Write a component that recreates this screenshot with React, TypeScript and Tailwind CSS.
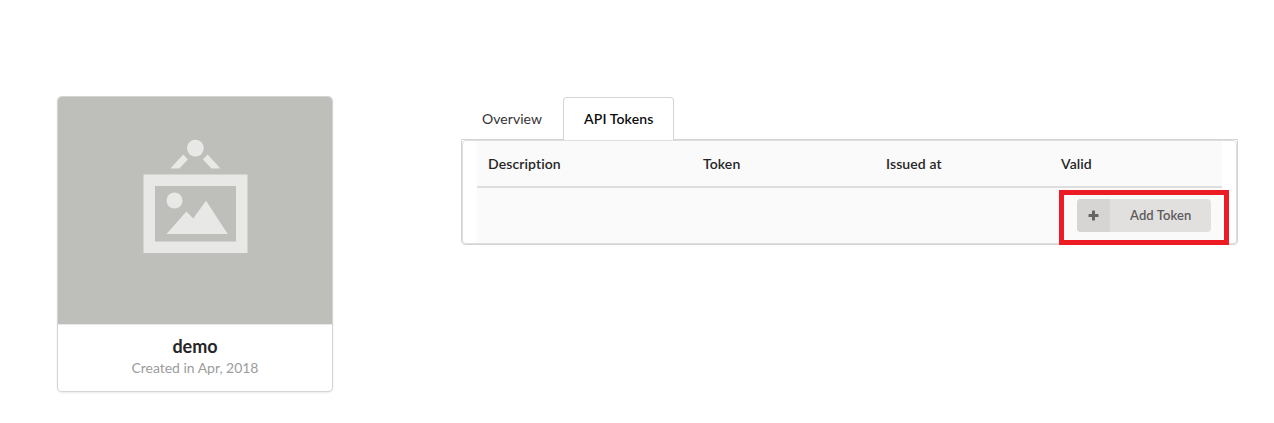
import React from "react";

function Placeholder() {
  return (
    <svg viewBox="0 0 274 227" className="block h-[227px] w-[274px]">
      <rect width="274" height="227" fill="#bebfba" />
      <g fill="#e8e8e6">
        <circle cx="137.4" cy="51.2" r="8.4" />
        <path d="M125.2 57.5 l4.7 4.9 -8.6 9 h-9z M149.6 57.5 l-4.7 4.9 8.6 9 h9z" />
        <path fillRule="evenodd" d="M85.5 77.5h104v78.5h-104z M97 89v55.5h81V89z" />
        <circle cx="116.5" cy="103.5" r="8" />
        <path d="M108.5 137 L128.4 114.5 L135.2 121.6 L148 103.7 L169.8 137z" />
      </g>
    </svg>
  );
}

function ProfileCard() {
  return (
    <section className="h-[294px] w-[274px] shrink-0 overflow-hidden rounded-[4px] bg-white text-center shadow-[0_1px_3px_0_#d4d4d5,0_0_0_1px_#d4d4d5]">
      <Placeholder />
      <div className="border-t border-[#e8e8e9] pt-[10px]">
        <h1 className="text-[18px] leading-[23px] font-bold text-[#262626]">demo</h1>
        <p className="text-[14px] leading-[20px] tracking-[-0.03px] text-[#9c9c9c]">Created in Apr, 2018</p>
      </div>
    </section>
  );
}

function Tabs() {
  return (
    <nav className="relative z-10 -mb-px flex h-[43px] text-[14px] leading-[14px]">
      <a className="w-[102px] pt-[15px] pl-[21px] tracking-[0.05px] text-[#333333]">Overview</a>
      <a className="w-[111px] rounded-t-[4px] border border-b-0 border-[#d4d4d5] bg-white pt-[14px] pl-5 font-semibold tracking-[0.12px] text-[#0d0d0d]">
        API Tokens
      </a>
    </nav>
  );
}

function AddTokenButton() {
  return (
    <button className="flex h-[33px] w-[134px] overflow-hidden rounded-[4px] bg-[#e1e0df] text-[13px] font-semibold tracking-[0.1px] text-[#5c5b5b]">
      <span className="flex h-full w-[33px] items-center justify-center bg-[#d6d5d4]">
        <svg viewBox="0 0 11 11" className="h-[11px] w-[11px]" fill="#656564">
          <path d="M4.6 .5h1.8q.6 0 .6.6V4h2.9q.6 0 .6.6v1.8q0 .6-.6.6H7v2.9q0 .6-.6.6H4.6q-.6 0-.6-.6V7H1.1q-.6 0-.6-.6V4.6Q.5 4 1.1 4H4V1.1q0-.6.6-.6z" />
        </svg>
      </span>
      <span className="flex-1 pl-5 text-left leading-[33px]">Add Token</span>
    </button>
  );
}

function TokenTable() {
  return (
    <div className="h-[106px] rounded-b-[4px] border border-[#d4d4d5] bg-white">
      <div className="h-full rounded-[4px] border border-[#dededf] px-[14px]">
        <div className="flex h-[47px] border-b-2 border-[#dededf] bg-[#fafafa] pl-[11px] text-[14px] leading-[46px] font-semibold tracking-[0.1px] text-[#262626]">
          <span className="w-[215px]">Description</span>
          <span className="w-[183px]">Token</span>
          <span className="w-[175px]">Issued at</span>
          <span>Valid</span>
        </div>
        <div className="flex h-[55px] justify-end bg-[#fafafa] pt-[11px] pr-[11px]">
          <div className="relative">
            <AddTokenButton />
            <div className="absolute -top-[9px] -left-[18px] h-[55px] w-[170px] border-[5px] border-[#ed1c24]" />
          </div>
        </div>
      </div>
    </div>
  );
}

export default function App() {
  return (
    <main className="flex h-[423px] w-[1274px] items-start gap-[129px] overflow-hidden bg-white pt-[97px] pl-[58px] font-['Lato',sans-serif] [font-variant-ligatures:none]">
      <ProfileCard />
      <section className="w-[777px]">
        <Tabs />
        <TokenTable />
      </section>
    </main>
  );
}
